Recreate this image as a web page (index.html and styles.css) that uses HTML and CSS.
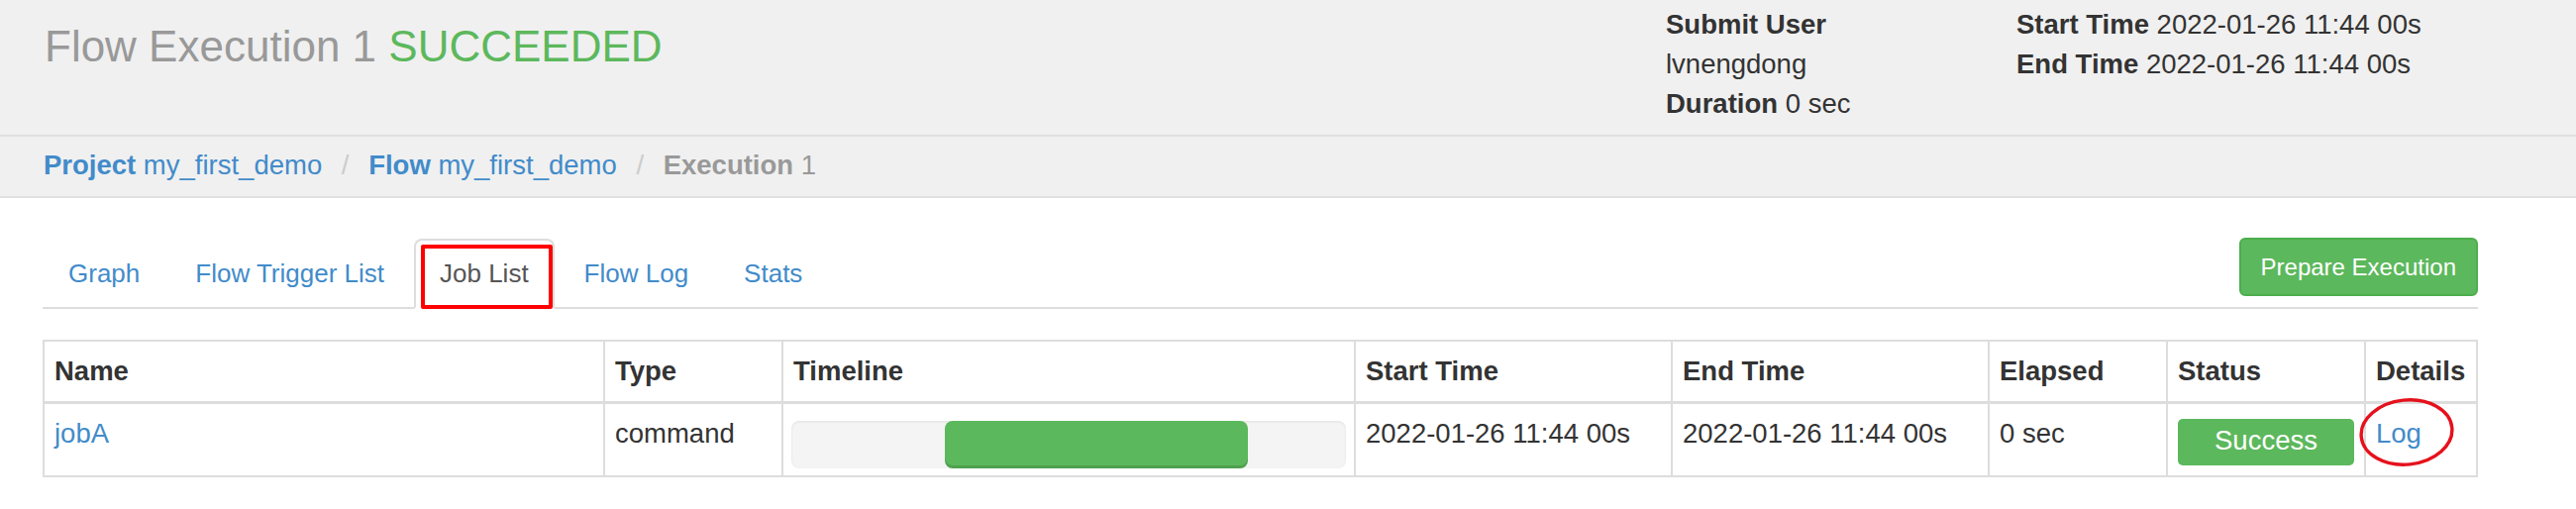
FILE: index.html
```html
<!DOCTYPE html>
<html lang="en">
<head>
<meta charset="utf-8">
<title>Flow Execution 1</title>
<link rel="stylesheet" href="styles.css">
</head>
<body>
<header class="page-header">
  <div class="header-main">
    <h1 class="title">Flow Execution 1 <span class="title-status">SUCCEEDED</span></h1>
  </div>
  <div class="meta meta-user">
    <div><strong>Submit User</strong></div>
    <div>lvnengdong</div>
    <div><strong>Duration</strong> 0 sec</div>
  </div>
  <div class="meta meta-time">
    <div><strong>Start Time</strong> 2022-01-26 11:44 00s</div>
    <div><strong>End Time</strong> 2022-01-26 11:44 00s</div>
  </div>
</header>

<nav class="crumbs">
  <ol class="breadcrumb">
    <li><a href="#"><strong>Project</strong> my_first_demo</a></li>
    <li><a href="#"><strong>Flow</strong> my_first_demo</a></li>
    <li class="current"><strong>Execution</strong> 1</li>
  </ol>
</nav>

<main class="content">
  <ul class="tabs">
    <li class="tab"><a href="#">Graph</a></li>
    <li class="tab"><a href="#">Flow Trigger List</a></li>
    <li class="tab active"><a href="#">Job List</a><span class="mark-box"></span></li>
    <li class="tab"><a href="#">Flow Log</a></li>
    <li class="tab"><a href="#">Stats</a></li>
    <li class="tab-action"><button class="btn-prepare" type="button">Prepare Execution</button></li>
  </ul>

  <table class="jobs">
    <colgroup>
      <col class="c-name"><col class="c-type"><col class="c-timeline"><col class="c-start">
      <col class="c-end"><col class="c-elapsed"><col class="c-status"><col class="c-details">
    </colgroup>
    <thead>
      <tr>
        <th>Name</th><th>Type</th><th>Timeline</th><th>Start Time</th>
        <th>End Time</th><th>Elapsed</th><th>Status</th><th>Details</th>
      </tr>
    </thead>
    <tbody>
      <tr>
        <td><a href="#">jobA</a></td>
        <td>command</td>
        <td class="cell-timeline">
          <div class="progress"><div class="progress-bar" style="margin-left:27.7%;width:54.6%"></div></div>
        </td>
        <td>2022-01-26 11:44 00s</td>
        <td>2022-01-26 11:44 00s</td>
        <td>0 sec</td>
        <td class="cell-status"><div class="status-badge">Success</div></td>
        <td class="cell-details"><a href="#">Log</a>
          <svg class="mark-ellipse" width="96" height="69" viewBox="0 0 96 69" aria-hidden="true">
            <ellipse cx="48" cy="34.5" rx="46" ry="32.5" fill="none" stroke="#e5111c" stroke-width="3.4" transform="rotate(-6 48 34.5)"/>
          </svg>
        </td>
      </tr>
    </tbody>
  </table>
</main>
</body>
</html>
```

FILE: styles.css
```css
* { box-sizing: border-box; }

html, body {
  margin: 0;
  padding: 0;
  background: #fff;
}

body {
  font-family: "Liberation Sans", Arial, sans-serif;
  font-size: 27.5px;
  line-height: 40px;
  color: #333;
}

a { color: #428bca; text-decoration: none; }

/* ---------- header ---------- */
.page-header {
  display: flex;
  height: 138px;
  background: #f0f0f0;
  border-bottom: 2px solid #e0e0e0;
  padding-left: 45px;
}

.header-main { flex: 1; }

.title {
  margin: 0;
  padding-top: 23px;
  font-size: 44px;
  line-height: 48px;
  font-weight: normal;
  color: #999;
}

.title-status { color: #5cb85c; }

.meta {
  padding-top: 5px;
  line-height: 40px;
  color: #333;
}

.meta-user { width: 354px; }
.meta-time { width: 565px; }

/* ---------- breadcrumb ---------- */
.crumbs {
  background: #f0f0f0;
  border-bottom: 2px solid #e0e0e0;
  padding: 9px 0 11px 44px;
}

.breadcrumb {
  margin: 0;
  padding: 0;
  list-style: none;
}

.breadcrumb li { display: inline-block; }

.breadcrumb li + li::before {
  content: "/\00a0";
  padding: 0 12px;
  color: #ccc;
}

.breadcrumb .current { color: #999; }

/* ---------- tabs ---------- */
.content {
  padding-left: 43px;
  width: 2502px;
}

.tabs {
  display: flex;
  align-items: flex-start;
  margin: 41px 0 0;
  padding: 0;
  list-style: none;
  border-bottom: 2px solid #ddd;
}

.tab {
  position: relative;
  margin: 0 4px -2px 0;
  font-size: 26px;
}

.tab a {
  display: block;
  padding: 13px 24px 14px;
  line-height: 40px;
  border: 2px solid transparent;
  border-radius: 8px 8px 0 0;
}

.tab.active a {
  color: #555;
  background: #fff;
  border-color: #ddd #ddd transparent;
}

.mark-box {
  position: absolute;
  left: 7px;
  top: 6px;
  right: 2px;
  bottom: 0;
  border: 4px solid #ff0000;
  border-radius: 2px;
  pointer-events: none;
}

.tab-action {
  margin-left: auto;
  margin-top: -1px;
}

.btn-prepare {
  display: block;
  padding: 11px 20px;
  font-family: inherit;
  font-size: 24px;
  line-height: 33px;
  color: #fff;
  background: #5cb85c;
  border: 2px solid #4cae4c;
  border-radius: 6px;
}

/* ---------- table ---------- */
.jobs {
  margin-top: 31px;
  width: 2459px;
  table-layout: fixed;
  border-collapse: separate;
  border-spacing: 0;
  border-left: 2px solid #ddd;
  border-top: 2px solid #ddd;
}

.c-name { width: 566px; }
.c-type { width: 180px; }
.c-timeline { width: 578px; }
.c-start { width: 320px; }
.c-end { width: 320px; }
.c-elapsed { width: 180px; }
.c-status { width: 200px; }
.c-details { width: 113px; }

.jobs th,
.jobs td {
  padding: 10px;
  text-align: left;
  vertical-align: top;
  line-height: 40px;
  border-right: 2px solid #ddd;
  border-bottom: 2px solid #ddd;
  white-space: nowrap;
}

.jobs th {
  font-weight: bold;
  border-bottom-width: 3px;
}

.jobs td.cell-timeline {
  padding: 17px 8px 7px;
}

.progress {
  height: 48px;
  background: #f4f4f4;
  border-radius: 8px;
  box-shadow: inset 0 1px 3px rgba(0, 0, 0, 0.08);
  overflow: hidden;
}

.progress-bar {
  height: 100%;
  background: #5cb85c;
  border-radius: 8px;
  box-shadow: inset 0 -3px 0 rgba(0, 0, 0, 0.12);
}

.jobs td.cell-status { padding-top: 15px; }

.status-badge {
  height: 47px;
  line-height: 43px;
  text-align: center;
  color: #fff;
  background: #5cb85c;
  border-radius: 5px;
}

.cell-details { position: relative; }

.mark-ellipse {
  position: absolute;
  left: -7px;
  top: -6px;
  pointer-events: none;
}
```
